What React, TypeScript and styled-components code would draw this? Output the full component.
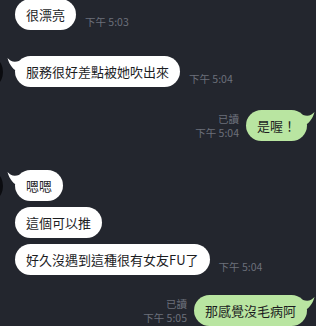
import React from "react";
import styled, { createGlobalStyle, css } from "styled-components";

const Global = createGlobalStyle`
  html, body { margin: 0; padding: 0; background: #23262e; }
  body { font-family: "Noto Sans CJK TC", "Noto Sans", sans-serif; overflow: hidden; }
`;

const Page = styled.div`
  width: 316px;
  height: 326px;
  overflow: hidden;
  display: flex;
  flex-direction: column;
  background: #23262e;
`;

const Group = styled.div<{ $mt: number; $side: "left" | "right" }>`
  display: flex;
  align-items: flex-start;
  margin-top: ${(p) => p.$mt}px;
  ${(p) =>
    p.$side === "left"
      ? css`padding-left: 15px;`
      : css`justify-content: flex-end; padding-right: 9px;`}
`;

const Avatar = styled.div`
  width: 36px;
  height: 36px;
  border-radius: 50%;
  background: #0b0c10;
  margin-left: -48px;
  margin-right: 12px;
  margin-top: -2px;
  flex-shrink: 0;
`;

const Stack = styled.div<{ $gap: number }>`
  display: flex;
  flex-direction: column;
  gap: ${(p) => p.$gap}px;
`;

const Row = styled.div<{ $side: "left" | "right" }>`
  display: flex;
  align-items: flex-end;
  gap: ${(p) => (p.$side === "left" ? 9 : 7)}px;
`;

const Bubble = styled.div<{ $side: "left" | "right" }>`
  position: relative;
  height: 31px;
  box-sizing: border-box;
  padding: 0 11px;
  display: flex;
  align-items: center;
  border-radius: 16px;
  font-size: 13px;
  line-height: 17px;
  white-space: nowrap;
  color: #1c1d1f;
  background: ${(p) => (p.$side === "left" ? "#ffffff" : "#b9e5a1")};
`;

const Tail = styled.svg<{ $side: "left" | "right" }>`
  position: absolute;
  top: 1px;
  width: 12px;
  height: 15px;
  ${(p) =>
    p.$side === "left"
      ? css`left: -8px;`
      : css`right: -8px; transform: scaleX(-1);`}
`;

const Meta = styled.div<{ $side: "left" | "right" }>`
  display: flex;
  flex-direction: column;
  align-items: ${(p) => (p.$side === "left" ? "flex-start" : "flex-end")};
  font-family: "Noto Sans CJK TC", "Noto Sans", sans-serif;
  font-size: 10.5px;
  line-height: 14px;
  color: #6c707b;
  padding-bottom: 1px;
  white-space: nowrap;
`;

const TailShape: React.FC<{ side: "left" | "right"; color: string }> = ({ side, color }) => (
  <Tail $side={side} viewBox="0 0 12 15">
    <path d="M0.5 1 C3.5 4.5 7 5.5 12 4 L12 15 C7 13.5 2.5 8.5 0.5 1 Z" fill={color} />
  </Tail>
);

type Msg = { text: string; time?: string; read?: boolean };

const Message: React.FC<{ side: "left" | "right"; msg: Msg; tail?: boolean }> = ({ side, msg, tail }) => {
  const bubble = (
    <Bubble $side={side}>
      {tail && <TailShape side={side} color={side === "left" ? "#ffffff" : "#b9e5a1"} />}
      {msg.text}
    </Bubble>
  );
  const meta = msg.time ? (
    <Meta $side={side}>
      {msg.read && <span>已讀</span>}
      <span>{msg.time}</span>
    </Meta>
  ) : null;
  return (
    <Row $side={side}>
      {side === "left" ? (
        <>
          {bubble}
          {meta}
        </>
      ) : (
        <>
          {meta}
          {bubble}
        </>
      )}
    </Row>
  );
};

export default function App() {
  return (
    <>
      <Global />
      <Page>
        <Group $side="left" $mt={-1}>
          <Stack $gap={6}>
            <Message side="left" msg={{ text: "很漂亮", time: "下午 5:03" }} />
          </Stack>
        </Group>
        <Group $side="left" $mt={26}>
          <Avatar />
          <Stack $gap={6}>
            <Message side="left" tail msg={{ text: "服務很好差點被她吹出來", time: "下午 5:04" }} />
          </Stack>
        </Group>
        <Group $side="right" $mt={20}>
          <Message side="right" tail msg={{ text: "是喔！", time: "下午 5:04", read: true }} />
        </Group>
        <Group $side="left" $mt={29}>
          <Avatar />
          <Stack $gap={6}>
            <Message side="left" tail msg={{ text: "嗯嗯" }} />
            <Message side="left" msg={{ text: "這個可以推" }} />
            <Message side="left" msg={{ text: "好久沒遇到這種很有女友FU了", time: "下午 5:04" }} />
          </Stack>
        </Group>
        <Group $side="right" $mt={20}>
          <Message side="right" tail msg={{ text: "那感覺沒毛病阿", time: "下午 5:05", read: true }} />
        </Group>
      </Page>
    </>
  );
}
